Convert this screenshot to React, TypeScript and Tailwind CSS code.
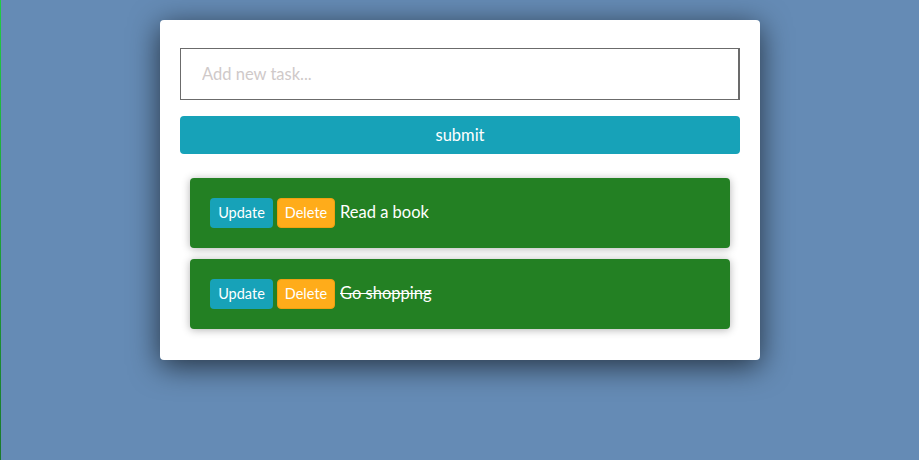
const tasks = [
  { id: 1, text: "Read a book", done: false },
  { id: 2, text: "Go shopping", done: true },
];

export default function App() {
  return (
    <div
      className="min-h-screen flex bg-[#658bb5]"
      style={{ fontFamily: "Lato, 'Open Sans', sans-serif" }}
    >
      <div className="w-px bg-gradient-to-b from-[#22cc44] to-[#1a7a2a]" />
      <div className="flex-1 flex justify-center pt-5">
        <div className="w-[600px] h-[340px] bg-white rounded-sm px-5 pt-7 shadow-[0_6px_30px_rgba(0,0,0,0.65)]">
          <input
            type="text"
            placeholder="Add new task..."
            className="block w-full h-[52px] border border-r-2 border-[#6b6b6b] px-[21px] text-[16.5px] text-[#333] outline-none placeholder:text-[#cfc9c9]"
          />
          <button
            type="button"
            className="mt-4 block w-full h-[38px] rounded bg-[#17a2b8] text-white text-[16.5px]"
          >
            submit
          </button>
          <div className="mt-6 px-2.5 flex flex-col gap-[11px]">
            {tasks.map((t) => (
              <div
                key={t.id}
                className="h-[70px] bg-[#238023] rounded-sm px-5 flex items-center shadow-[0_1px_8px_rgba(0,0,0,0.3)]"
              >
                <button
                  type="button"
                  className="h-[30px] w-[63px] rounded-sm bg-[#17a2b8] text-white text-[14.5px]"
                >
                  Update
                </button>
                <button
                  type="button"
                  className="ml-1 h-[30px] w-[58px] rounded-sm bg-[#ffac1a] border border-[#f0a010] text-white text-[14.5px]"
                >
                  Delete
                </button>
                <span
                  className={
                    "ml-[5px] text-[16.5px] text-white -mt-0.5 " +
                    (t.done ? "line-through" : "")
                  }
                >
                  {t.text}
                </span>
              </div>
            ))}
          </div>
        </div>
      </div>
    </div>
  );
}
